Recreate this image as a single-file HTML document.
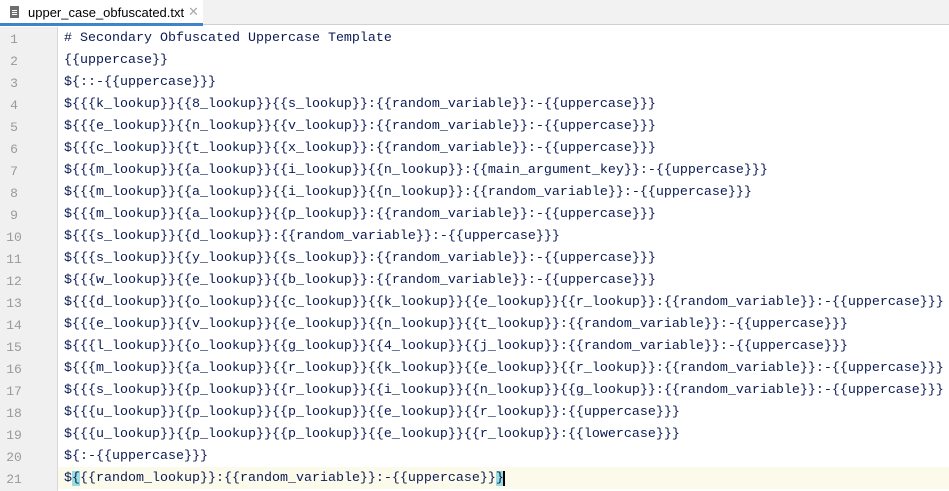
<!DOCTYPE html>
<html><head><style>
body{margin:0;width:949px;height:491px;overflow:hidden;background:#fff;font-family:"Liberation Mono",monospace;}
.tabs{position:absolute;left:0;top:0;width:949px;height:24px;background:#f2f2f2;border-bottom:1px solid #d0d0d0;}
.tab{position:absolute;left:0;top:0;width:203px;height:24px;background:#fff;}
.tab .bar{position:absolute;left:0;bottom:-2px;width:203px;height:3px;background:#4083c9;}
.tab .name{position:absolute;left:28px;top:5px;font:13px "Liberation Sans",sans-serif;color:#000;}
.tab .x{position:absolute;left:188px;top:4px;font:13px "Liberation Sans",sans-serif;color:#aaa;}
.ico{position:absolute;left:10px;top:6px;width:9px;height:12px;background:#6e6e6e;}
.ico i{position:absolute;left:2px;height:1px;width:5px;background:#fff;}
.gutter{position:absolute;left:0;top:27px;width:57px;height:464px;background:#f0f0f0;border-right:1px solid #d8d8d8;}
.ln{position:absolute;left:0;width:28px;text-align:center;color:#9a9a9a;font-size:13px;}
.line{position:absolute;left:64px;font-size:13.33px;color:#0a1a55;white-space:pre;}
.cur{position:absolute;left:58px;top:467px;width:891px;height:22px;background:#fcfaeb;}
.hl{background:#99dde0;}
</style></head><body>
<div class="tabs"><div class="tab"><div class="ico"><i style="top:4px"></i><i style="top:6px"></i><i style="top:8px"></i></div><span class="name">upper_case_obfuscated.txt</span><span class="x">✕</span><div class="bar"></div></div></div>
<div class="gutter"></div>
<div class="cur"></div>
<div id="c"></div>
<script>
var L=["# Secondary Obfuscated Uppercase Template","{{uppercase}}","${::-{{uppercase}}}",
"${{{k_lookup}}{{8_lookup}}{{s_lookup}}:{{random_variable}}:-{{uppercase}}}",
"${{{e_lookup}}{{n_lookup}}{{v_lookup}}:{{random_variable}}:-{{uppercase}}}",
"${{{c_lookup}}{{t_lookup}}{{x_lookup}}:{{random_variable}}:-{{uppercase}}}",
"${{{m_lookup}}{{a_lookup}}{{i_lookup}}{{n_lookup}}:{{main_argument_key}}:-{{uppercase}}}",
"${{{m_lookup}}{{a_lookup}}{{i_lookup}}{{n_lookup}}:{{random_variable}}:-{{uppercase}}}",
"${{{m_lookup}}{{a_lookup}}{{p_lookup}}:{{random_variable}}:-{{uppercase}}}",
"${{{s_lookup}}{{d_lookup}}:{{random_variable}}:-{{uppercase}}}",
"${{{s_lookup}}{{y_lookup}}{{s_lookup}}:{{random_variable}}:-{{uppercase}}}",
"${{{w_lookup}}{{e_lookup}}{{b_lookup}}:{{random_variable}}:-{{uppercase}}}",
"${{{d_lookup}}{{o_lookup}}{{c_lookup}}{{k_lookup}}{{e_lookup}}{{r_lookup}}:{{random_variable}}:-{{uppercase}}}",
"${{{e_lookup}}{{v_lookup}}{{e_lookup}}{{n_lookup}}{{t_lookup}}:{{random_variable}}:-{{uppercase}}}",
"${{{l_lookup}}{{o_lookup}}{{g_lookup}}{{4_lookup}}{{j_lookup}}:{{random_variable}}:-{{uppercase}}}",
"${{{m_lookup}}{{a_lookup}}{{r_lookup}}{{k_lookup}}{{e_lookup}}{{r_lookup}}:{{random_variable}}:-{{uppercase}}}",
"${{{s_lookup}}{{p_lookup}}{{r_lookup}}{{i_lookup}}{{n_lookup}}{{g_lookup}}:{{random_variable}}:-{{uppercase}}}",
"${{{u_lookup}}{{p_lookup}}{{p_lookup}}{{e_lookup}}{{r_lookup}}:{{uppercase}}}",
"${{{u_lookup}}{{p_lookup}}{{p_lookup}}{{e_lookup}}{{r_lookup}}:{{lowercase}}}",
"${:-{{uppercase}}}",
"$<span class=hl>{</span>{{random_lookup}}:{{random_variable}}:-{{uppercase}}<span class=hl>}</span>"];
var h="";for(var i=0;i<L.length;i++){var t=27+i*22;
h+='<div class="ln" style="top:'+(t+5)+'px">'+(i+1)+'</div><div class="line" style="top:'+(t+4)+'px">'+(i==20?L[i]+'<span style="border-left:2px solid #000;margin-left:-1px"></span>':L[i])+'</div>';}
document.getElementById("c").innerHTML=h;
</script>
</body></html>
